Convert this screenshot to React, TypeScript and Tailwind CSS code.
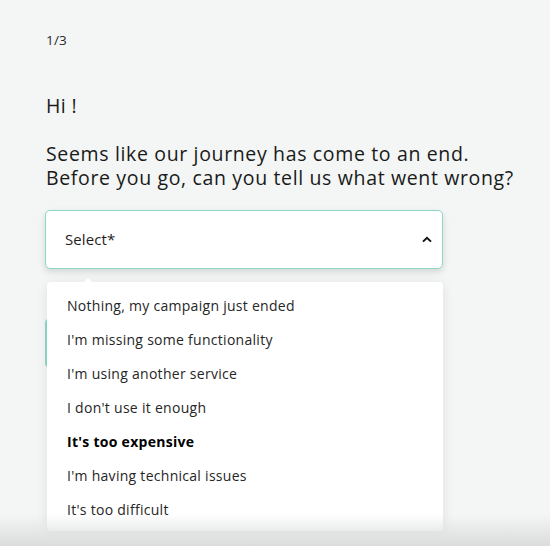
import React from "react";

const options = [
  "Nothing, my campaign just ended",
  "I'm missing some functionality",
  "I'm using another service",
  "I don't use it enough",
  "It's too expensive",
  "I'm having technical issues",
  "It's too difficult",
];

export default function App() {
  return (
    <div
      className="relative w-[550px] h-[546px] overflow-hidden bg-[#f3f6f5] text-[#1a1a1a]"
      style={{ fontFamily: '"Open Sans", "Noto Sans", sans-serif' }}
    >
      <div className="pl-[45px] pt-[32px]">
        <div className="pl-[1px] text-[13.5px] leading-[16px] text-[#2a2a2a] tracking-[0.2px]">1/3</div>
        <div className="mt-[46px] pl-[1px] text-[19.5px] leading-[24px] tracking-[0.4px]">Hi !</div>
        <div className="mt-[24px] pl-[1px] text-[19.5px] leading-[24px] tracking-[0.65px]">
          Seems like our journey has come to an end.
          <br />
          Before you go, can you tell us what went wrong?
        </div>
        <div className="mt-[20px] relative w-[398px]">
          <div className="h-[59px] rounded-[5px] border border-[#8ad9c7] bg-white shadow-[0_3px_7px_rgba(0,0,0,0.13)] flex items-center justify-between pl-[19px] pr-[10px]">
            <span className="text-[15px] tracking-[0.1px] text-[#1e1e1e]">Select*</span>
            <svg width="10" height="7" viewBox="0 0 10 7">
              <path d="M1 5.6 L5 1.8 L9 5.6" fill="none" stroke="#111" strokeWidth="2" />
            </svg>
          </div>
          <div className="mt-[49px] h-[50px] w-[160px] rounded-[5px] bg-[#8fd9c8]" />
          <div className="absolute left-[2px] top-[72px] w-[396px] rounded-[4px] bg-white shadow-[0_2px_12px_rgba(0,0,0,0.09)] pt-[6px] pb-[5px]">
            <div className="absolute left-[36px] top-[-4px] w-0 h-0 border-l-[5px] border-r-[5px] border-b-[5px] border-l-transparent border-r-transparent border-b-white" />
            {options.map((o, i) => (
              <div
                key={o}
                className={`h-[34px] flex items-center pl-[20px] text-[14px] tracking-[0.28px] ${
                  i === 4 ? "font-bold text-black" : "text-[#262626]"
                }`}
              >
                {o}
              </div>
            ))}
          </div>
        </div>
      </div>
      <div className="pointer-events-none absolute left-0 right-0 bottom-0 h-[32px] bg-gradient-to-b from-[rgba(222,225,224,0)] via-[rgba(222,225,224,0.6)] to-[rgba(218,221,220,1)]" />
    </div>
  );
}
